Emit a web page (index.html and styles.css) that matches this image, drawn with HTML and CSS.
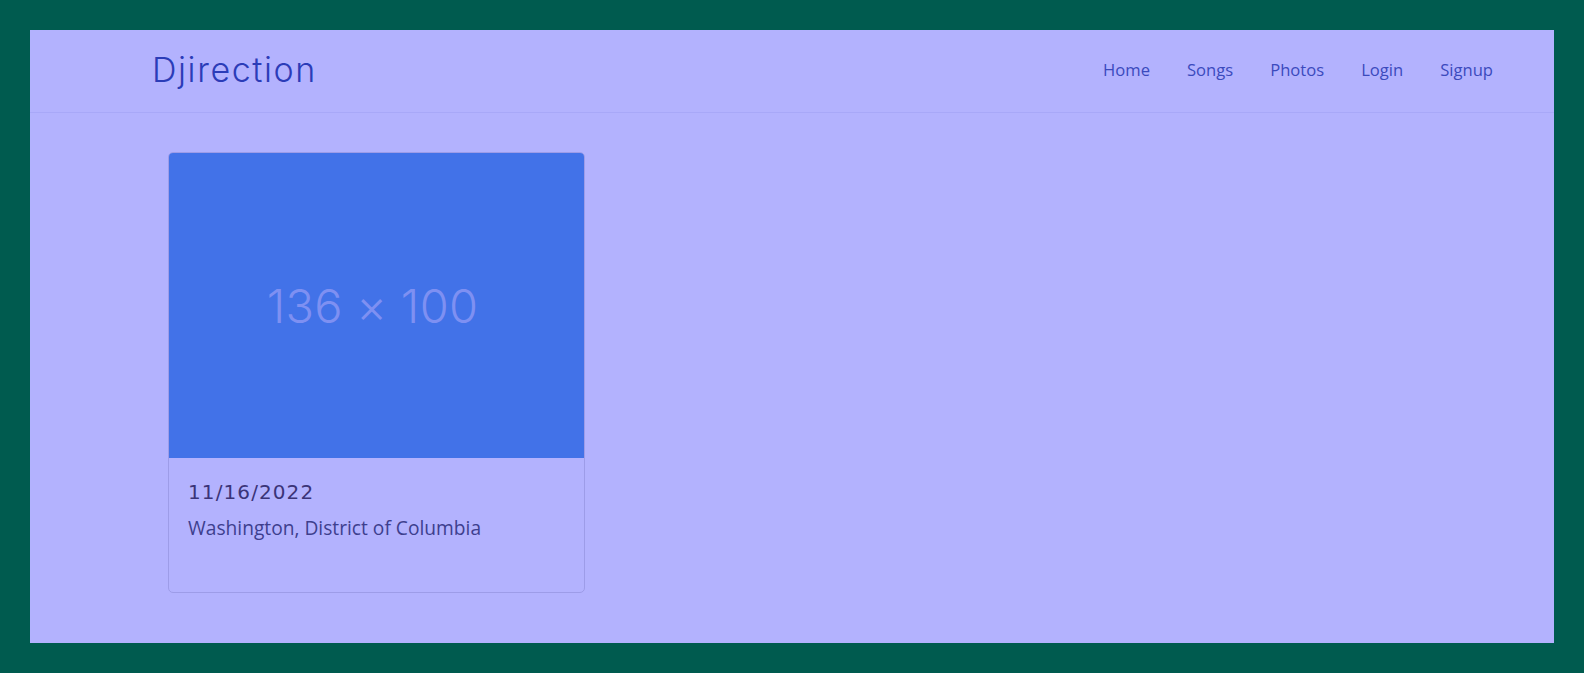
FILE: index.html
```html
<!DOCTYPE html>
<html lang="en">
<head>
<meta charset="utf-8">
<title>Djirection</title>
<link rel="stylesheet" href="styles.css">
</head>
<body>
<div class="frame">
  <header class="navbar">
    <a class="brand" href="#">Djirection</a>
    <nav class="nav">
      <a href="#">Home</a>
      <a href="#">Songs</a>
      <a href="#">Photos</a>
      <a href="#">Login</a>
      <a href="#">Signup</a>
    </nav>
  </header>
  <main class="content">
    <div class="card">
      <div class="card-img"><span>136 × 100</span></div>
      <div class="card-body">
        <h5 class="card-title">11/16/2022</h5>
        <p class="card-text">Washington, District of Columbia</p>
      </div>
    </div>
  </main>
</div>
</body>
</html>
```

FILE: styles.css
```css
* { box-sizing: border-box; }
html, body { margin: 0; padding: 0; }
body {
  background: #005b4f;
  padding: 30px;
  height: 673px;
  font-family: "Open Sans", "Liberation Sans", sans-serif;
}
.frame {
  background: #b3b2fe;
  height: 613px;
}
.navbar {
  height: 83px;
  border-bottom: 1px solid #a8a8f8;
  display: flex;
  align-items: center;
  justify-content: space-between;
  padding: 0 61px 0 122px;
}
.brand {
  font-family: "Inter", "Lato", sans-serif;
  font-weight: 300;
  font-size: 34px;
  color: #2b3cb8;
  text-decoration: none;
  letter-spacing: 1.6px;
  margin-top: -4px;
}
.nav {
  display: flex;
  gap: 37px;
  margin-top: -3px;
}
.nav a {
  font-size: 16.6px;
  color: #3b4abd;
  text-decoration: none;
}
.content {
  padding: 39px 0 0 138px;
}
.card {
  width: 417px;
  height: 441px;
  border: 1px solid #9d9ce8;
  border-radius: 5px;
  overflow: hidden;
  display: flex;
  flex-direction: column;
}
.card-img {
  height: 305px;
  background: #4272e8;
  display: flex;
  align-items: center;
  justify-content: center;
}
.card-img span {
  font-family: "Inter", "Liberation Sans", sans-serif;
  font-weight: 300;
  font-size: 47px;
  letter-spacing: 0.3px;
  color: #7e90f2;
  margin: 0 8px 0 0;
}
.card-body {
  padding: 22px 19px;
}
.card-title {
  margin: 0 0 10px;
  font-family: "DejaVu Sans", sans-serif;
  font-weight: 500;
  font-size: 20px;
  line-height: 24px;
  letter-spacing: 1.1px;
  color: #3b3478;
}
.card-text {
  margin: 0;
  font-size: 19.2px;
  line-height: 28px;
  color: #3e3f8e;
}
```
